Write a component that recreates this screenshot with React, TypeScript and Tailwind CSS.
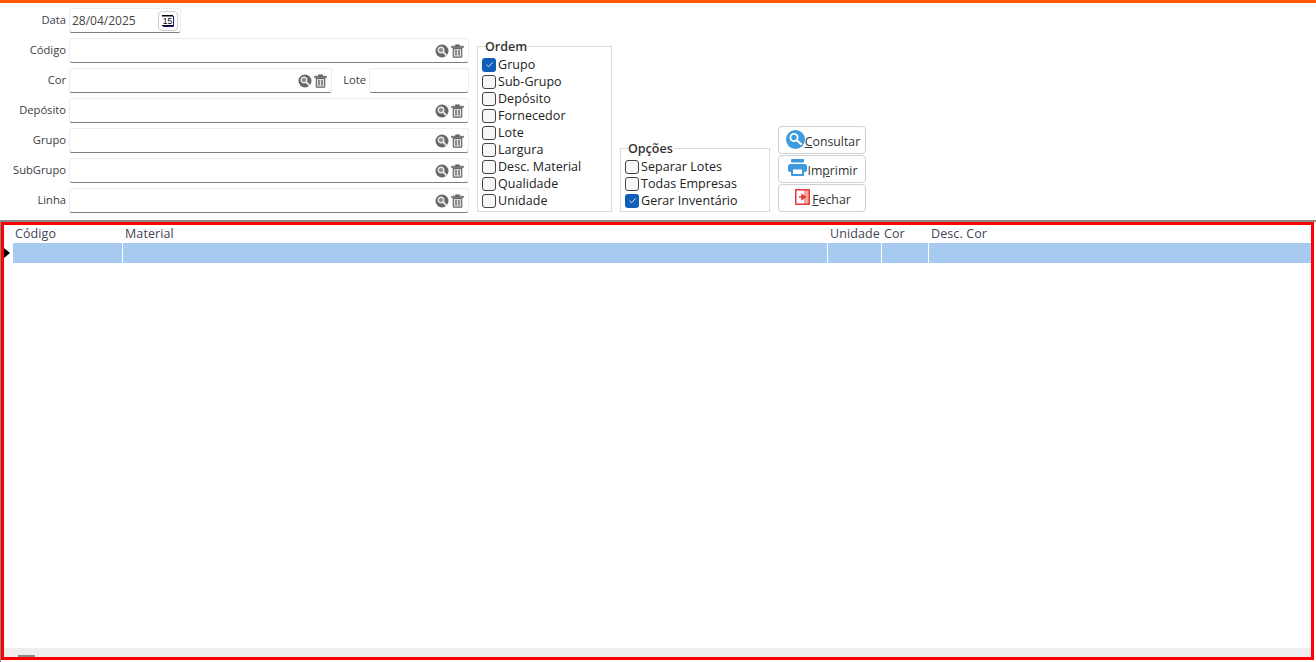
import type { ReactNode } from 'react'

const font = "[font-family:'Open_Sans','Noto_Sans',sans-serif]"

function SearchDot() {
  return (
    <svg width="14" height="14" viewBox="0 0 14 14" className="shrink-0">
      <circle cx="7" cy="7" r="6.5" fill="#666" />
      <circle cx="6" cy="6" r="2.8" fill="#8a8a8a" stroke="#e8e8e8" strokeWidth="1.4" />
      <path d="M8.2 8.2 11 11" stroke="#e8e8e8" strokeWidth="1.8" strokeLinecap="round" />
    </svg>
  )
}

function Trash() {
  return (
    <svg width="13" height="14" viewBox="0 0 13 14" className="shrink-0">
      <path d="M0.5 2.2h12v1.3H0.5zM4.5 2.2V0.8h4v1.4" fill="#666" stroke="#666" strokeWidth="0.6" />
      <path d="M2.3 4.4h8.4v8.2a.6.6 0 0 1-.6.6H2.9a.6.6 0 0 1-.6-.6z" fill="#e4e4e4" stroke="#666" strokeWidth="1.2" />
      <path d="M5 5.8v5.8M8 5.8v5.8" stroke="#666" strokeWidth="1.4" />
    </svg>
  )
}

function Box({ children, className = '' }: { children?: ReactNode; className?: string }) {
  return (
    <div className={`h-[25px] flex items-center rounded-[3px] border border-[#ededed] border-b-[#808080] bg-white ${className}`}>
      {children}
    </div>
  )
}

function LookupField({ label }: { label: string }) {
  return (
    <div className="flex items-center h-[25px]">
      <span className="w-[66px] text-right text-[11.2px] text-[#3c3c46]">{label}</span>
      <Box className="ml-[3px] w-[400px]">
        <div className="ml-auto flex items-center gap-[2px] pr-[4px]">
          <SearchDot />
          <Trash />
        </div>
      </Box>
    </div>
  )
}

function Check({ label, checked }: { label: string; checked?: boolean }) {
  return (
    <div className="flex items-center h-[17px] gap-[2px]">
      {checked ? (
        <span className="w-[14px] h-[14px] mb-[2px] rounded-[3px] bg-[#0f5fb8] flex items-center justify-center">
          <svg width="9" height="9" viewBox="0 0 9 9">
            <path d="M1.5 4.8 3.6 6.8 7.6 2.4" fill="none" stroke="#cfe3f7" strokeWidth="1" />
          </svg>
        </span>
      ) : (
        <span className="w-[14px] h-[14px] mb-[2px] rounded-[3px] border border-[#444] bg-[#f6f6f6]" />
      )}
      <span className="text-[12.5px] leading-none tracking-[0.05px] text-[#222]">{label}</span>
    </div>
  )
}

function Group({ title, className, children }: { title: string; className: string; children: ReactNode }) {
  return (
    <fieldset className={`border border-[#dcdcdc] ${className}`}>
      <legend className="ml-[3px] text-[12.5px] leading-[14px] font-semibold text-[#333] h-[12px]">{title}</legend>
      {children}
    </fieldset>
  )
}

function ActionButton({ icon, children }: { icon: ReactNode; children: ReactNode }) {
  return (
    <button className="w-[88px] h-[28px] pl-[2px] rounded-[4px] border border-[#d0d0d0] bg-white flex items-center justify-center text-[12.3px] text-[#333]">
      {icon}
      <span className="pt-[5px]">{children}</span>
    </button>
  )
}

const columns = [
  { name: 'Código', w: 'w-[110px]' },
  { name: 'Material', w: 'w-[705px]' },
  { name: 'Unidade', w: 'w-[54px]' },
  { name: 'Cor', w: 'w-[47px]' },
  { name: 'Desc. Cor', w: 'flex-1' },
]

export default function App() {
  return (
    <div className={`h-[662px] w-[1316px] overflow-hidden flex flex-col bg-white ${font}`}>
      <div className="h-[3px] bg-[#ff5500] shrink-0" />

      <div className="flex items-end h-[217px] shrink-0 pt-[5px] pb-[8px]">
        <div className="w-[477px] self-start flex flex-col gap-[5px]">
          <div className="flex items-center h-[25px]">
            <span className="w-[66px] text-right text-[11.2px] text-[#3c3c46]">Data</span>
            <Box className="ml-[3px] w-[112px] pl-[2px]">
              <span className="text-[12px] text-[#444]">28/04/2025</span>
              <span className="ml-auto mr-[2px] w-[20px] h-[20px] rounded-[4px] border border-[#cfcfcf] flex items-center justify-center">
                <svg width="12" height="12" viewBox="0 0 12 12">
                  <path d="M11.5 1v10.5H1" fill="none" stroke="#1a1a8c" />
                  <rect x="0.5" y="0.5" width="10" height="10" fill="#fff" />
                  <path d="M0 0.75h11" stroke="#000" strokeWidth="1.5" />
                  <path d="M0 10.5h11" stroke="#000" strokeWidth="1" />
                  <text x="5.5" y="9.3" textAnchor="middle" fontSize="8.5" fontFamily="Liberation Sans, sans-serif" fill="#000">15</text>
                </svg>
              </span>
            </Box>
          </div>
          <LookupField label="Código" />
          <div className="flex items-center h-[25px]">
            <span className="w-[66px] text-right text-[11.2px] text-[#3c3c46]">Cor</span>
            <Box className="ml-[3px] w-[263px]">
              <div className="ml-auto flex items-center gap-[2px] pr-[4px]">
                <SearchDot />
                <Trash />
              </div>
            </Box>
            <span className="w-[34px] text-right text-[11.2px] text-[#3c3c46] mr-[3px]">Lote</span>
            <Box className="w-[100px]" />
          </div>
          <LookupField label="Depósito" />
          <LookupField label="Grupo" />
          <LookupField label="SubGrupo" />
          <LookupField label="Linha" />
        </div>

        <Group title="Ordem" className="w-[135px] h-[172px] pl-[4px] pt-[5px] mr-[8px]">
          <Check label="Grupo" checked />
          <Check label="Sub-Grupo" />
          <Check label="Depósito" />
          <Check label="Fornecedor" />
          <Check label="Lote" />
          <Check label="Largura" />
          <Check label="Desc. Material" />
          <Check label="Qualidade" />
          <Check label="Unidade" />
        </Group>

        <Group title="Opções" className="w-[150px] h-[70px] pl-[4px] pt-[5px] mr-[8px]">
          <Check label="Separar Lotes" />
          <Check label="Todas Empresas" />
          <Check label="Gerar Inventário" checked />
        </Group>

        <div className="flex flex-col gap-px">
          <ActionButton
            icon={
              <svg width="19" height="19" viewBox="0 0 19 19" className="mb-[2px] shrink-0">
                <circle cx="9.5" cy="9.5" r="9.5" fill="#3d9ade" />
                <circle cx="8" cy="7.5" r="3.6" fill="none" stroke="#fff" strokeWidth="1.8" />
                <path d="M10.8 10.2 15 14" stroke="#fff" strokeWidth="2.2" strokeLinecap="round" />
              </svg>
            }
          >
            <span className="underline">C</span>onsultar
          </ActionButton>
          <ActionButton
            icon={
              <svg width="19" height="17" viewBox="0 0 19 17" className="mb-[3px] shrink-0">
                <rect x="3" y="0" width="13" height="3.5" rx="1" fill="#3d9ade" />
                <rect x="0" y="5" width="19" height="8" rx="2.5" fill="#3d9ade" />
                <rect x="3" y="9" width="13" height="8" rx="1" fill="#3d9ade" />
                <rect x="5" y="10.5" width="9" height="4.5" fill="#fff" />
              </svg>
            }
          >
            Im<span className="underline">p</span>rimir
          </ActionButton>
          <ActionButton
            icon={
              <svg width="15" height="16" viewBox="0 0 15 16" className="mr-[2px] mb-[2px] shrink-0">
                <rect x="0" y="0" width="15" height="16" rx="1" fill="#e53935" />
                <rect x="1.5" y="1.5" width="7.5" height="13" fill="#fff" />
                <rect x="9" y="1.5" width="4.5" height="13" fill="#f4a5a2" />
                <path d="M4 8h5M7 5.5v5L10.5 8z" stroke="#e53935" strokeWidth="1.3" fill="#e53935" />
              </svg>
            }
          >
            <span className="underline">F</span>echar
          </ActionButton>
        </div>
      </div>

      <div className="h-[2px] bg-[#8a8a8a] shrink-0" />
      <div className="flex-1 border-l border-[#8a8a8a]">
        <div className="h-[438px] w-[1313px] border-[3px] border-[#ff0000] flex flex-col bg-white">
          <div className="flex h-[18px] pl-[9px] shrink-0">
            {columns.map((c) => (
              <div key={c.name} className={`${c.w} pl-[2px] text-[12.5px] leading-[17px] tracking-[0.1px] text-[#444455]`}>
                {c.name}
              </div>
            ))}
          </div>
          <div className="flex h-[20px] shrink-0">
            <span className="w-[9px] flex items-center">
              <span className="w-0 h-0 border-y-[5px] border-y-transparent border-l-[6px] border-l-black" />
            </span>
            {columns.map((c) => (
              <div key={c.name} className={`${c.w} bg-[#a6caf0] border-r border-white last:border-r-0`} />
            ))}
          </div>
          <div className="flex-1" />
          <div className="h-[9px] bg-[#eeeeee] shrink-0 relative">
            <div className="absolute left-[14px] bottom-0 w-[17px] h-[2px] bg-[#8a8a8a]" />
          </div>
        </div>
      </div>
    </div>
  )
}
